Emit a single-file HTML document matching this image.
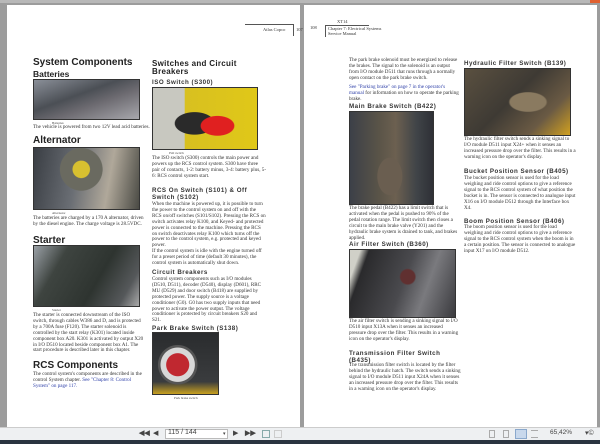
<!DOCTYPE html>
<html><head><meta charset="utf-8"><style>
*{margin:0;padding:0;box-sizing:border-box}
body{width:600px;height:444px;background:#9c9c9c;position:relative;overflow:hidden;font-family:"Liberation Serif",serif}
.pg{position:absolute;background:#fff;top:5px;height:422px}
.a{position:absolute}
.h1{font-family:"Liberation Sans",sans-serif;font-weight:bold;color:#222;font-size:10px;line-height:10px}
.h2{font-family:"Liberation Sans",sans-serif;font-weight:bold;color:#222;font-size:8.5px;line-height:8px}
.h3{font-family:"Liberation Sans",sans-serif;font-weight:bold;color:#333;font-size:6.2px;line-height:7px;letter-spacing:.5px}
.t{font-size:5.1px;line-height:5.9px;color:#333}
.cap{font-size:3.3px;color:#444}
.lk{color:#3344aa}
.img{position:absolute;border:1px solid #333}
.tb{position:absolute;top:427px;left:0;width:600px;height:13px;background:#eef0f2;border-top:1px solid #ccc}
.tb span{position:absolute;top:1px;font-family:"Liberation Sans",sans-serif;font-size:7px;color:#444}
</style></head><body>
<div style="position:absolute;left:0;top:0;width:600px;height:3px;background:#b8b8b8"></div>
<div style="position:absolute;left:590px;top:0;width:10px;height:3px;background:#e06030"></div>
<!-- left page -->
<div class="pg" style="left:7px;width:293px">
<div class="a" style="left:238px;top:19px;width:48px;height:1px;background:#555"></div>
<div class="a" style="left:286px;top:19px;width:1px;height:12px;background:#555"></div>
<div class="a t" style="left:256px;top:22px;font-size:4.5px">Atlas Copco</div>
<div class="a t" style="left:289px;top:22px;font-size:4.5px">107</div>

<div class="a h1" style="left:26px;top:53px">System Components</div>
<div class="a h2" style="left:26px;top:65px">Batteries</div>
<div class="img" style="left:26px;top:74px;width:107px;height:41px;background:linear-gradient(160deg,#8a8f98,#4b4f55 40%,#6c6a70 60%,#a8a8ad)"></div>
<div class="a cap" style="left:45px;top:116px">Batteries</div>
<div class="a t" style="left:26px;top:120px;white-space:nowrap">The vehicle is powered from two 12V lead acid batteries.</div>
<div class="a h1" style="left:26px;top:131px">Alternator</div>
<div class="img" style="left:26px;top:142px;width:107px;height:63px;background:radial-gradient(circle at 45% 35%,#d8c030 0 12%,#6a6a60 13% 30%,transparent 31%),linear-gradient(100deg,#3a3e44,#6a6e74 40%,#b0a89a 70%,#4a4a44)"></div>
<div class="a cap" style="left:45px;top:206px">Alternator</div>
<div class="a t" style="left:26px;top:211px;width:112px">The batteries are charged by a 170 A alternator, driven by the diesel engine. The charge voltage is 28.5VDC.</div>
<div class="a h1" style="left:26px;top:231px">Starter</div>
<div class="img" style="left:26px;top:240px;width:107px;height:62px;background:linear-gradient(120deg,#9aa0a6,#3e4440 25%,#2e3430 60%,#55585a 85%,#aaa)"></div>
<div class="a cap" style="left:45px;top:303px">Starter</div>
<div class="a t" style="left:26px;top:308px;width:112px">The starter is connected downstream of the ISO switch, through cables W386 and D, and is protected by a 700A fuse (F120). The starter solenoid is controlled by the start relay (K301) located inside component box A20. K301 is activated by output X20 in I/O D510 located beside component box A1. The start procedure is described later in this chapter.</div>
<div class="a h1" style="left:26px;top:356px">RCS Components</div>
<div class="a t" style="left:26px;top:367px;width:112px">The control system's components are described in the control System chapter. <span class="lk">See "Chapter 8: Control System" on page 117.</span></div>

<div class="a h2" style="left:145px;top:55px;font-size:8px;line-height:8px;letter-spacing:.3px">Switches and Circuit<br>Breakers</div>
<div class="a h3" style="left:145px;top:74px">ISO Switch (S300)</div>
<div class="img" style="left:145px;top:82px;width:106px;height:63px;background:radial-gradient(ellipse at 62% 62%,#e02020 0 18%,transparent 19%),radial-gradient(ellipse at 40% 58%,#2a2a2a 0 22%,transparent 23%),linear-gradient(90deg,#c8c8c0 0 30%,#d8c020 31%,#e0c818)"></div>
<div class="a cap" style="left:162px;top:146px">ISO switch</div>
<div class="a t" style="left:145px;top:151px;width:114px">The ISO switch (S300) controls the main power and powers up the RCS control system. S300 have three pair of contacts, 1-2: battery minus, 3-4: battery plus, 5-6: RCS control system start.</div>
<div class="a h3" style="left:145px;top:182px;line-height:7px">RCS On Switch (S101) &amp; Off<br>Switch (S102)</div>
<div class="a t" style="left:145px;top:197px;width:114px">When the machine is powered up, it is possible to turn the power to the control system on and off with the RCS on/off switches (S101/S102). Pressing the RCS on switch activates relay K100, and Keyed- and protected power is connected to the machine. Pressing the RCS on switch deactivates relay K100 which turns off the power to the control system, e.g. protected and keyed power.<br>If the control system is idle with the engine turned off for a preset period of time (default 30 minutes), the control system is automatically shut down.</div>
<div class="a h3" style="left:145px;top:264px">Circuit Breakers</div>
<div class="a t" style="left:145px;top:272px;width:114px">Control system components such as I/O modules (D510, D511), decoder (D540), display (D601), RRC MU (D529) and door switch (B418) are supplied by protected power. The supply source is a voltage conditioner (G0). G0 has two supply inputs that need power to activate the power output. The voltage conditioner is protected by circuit breakers S20 and S21.</div>
<div class="a h3" style="left:145px;top:320px">Park Brake Switch (S138)</div>
<div class="img" style="left:145px;top:327px;width:67px;height:63px;background:radial-gradient(circle at 38% 52%,#c02830 0 22%,#d8d8d8 23% 33%,#555 34% 38%,transparent 39%),linear-gradient(180deg,#2a2c2e,#3a3c3e 80%,#c8a020)"></div>
<div class="a cap" style="left:167px;top:391px">Park brake switch</div>
</div>
<!-- right page -->
<div class="pg" style="left:304px;width:293px">
<div class="a t" style="left:33px;top:14px;font-size:4.5px">XT14</div>
<div class="a t" style="left:6px;top:20px;font-size:4.5px">108</div>
<div class="a" style="left:21px;top:20px;width:1px;height:12px;background:#555"></div>
<div class="a" style="left:21px;top:20px;width:44px;height:1px;background:#555"></div>
<div class="a t" style="left:24px;top:21px;font-size:4.5px;line-height:5px">Chapter 7: Electrical Systems<br>Service Manual</div>

<div class="a t" style="left:45px;top:53px;width:110px">The park brake solenoid must be energized to release the brakes. The signal to the solenoid is an output from I/O module D511 that runs through a normally open contact on the park brake switch.</div>
<div class="a t" style="left:45px;top:80px;width:112px"><span class="lk">See "Parking brake" on page 7 in the operator's manual</span> for information on how to operate the parking brake.</div>
<div class="a h3" style="left:45px;top:98px">Main Brake Switch (B422)</div>
<div class="img" style="left:45px;top:106px;width:85px;height:94px;background:radial-gradient(ellipse at 48% 70%,#6a5e50 0 20%,transparent 21%),linear-gradient(90deg,#3c4048,#5a5448 35%,#6c6050 55%,#404448 80%,#2e3036)"></div>
<div class="a t" style="left:45px;top:201px;width:112px">The brake pedal (B422) has a limit switch that is activated when the pedal is pushed to 90% of the pedal rotation range. The limit switch then closes a circuit to the main brake valve (Y201) and the hydraulic brake system is drained to tank, and brakes applied.</div>
<div class="a h3" style="left:45px;top:236px">Air Filter Switch (B360)</div>
<div class="img" style="left:45px;top:244px;width:107px;height:69px;background:radial-gradient(circle at 55% 40%,#603030 0 10%,transparent 12%),linear-gradient(110deg,#d0d0c8 0 8%,#2a2a2c 15%,#4a4a4e 50%,#7a7a7e 70%,#3a3a3e)"></div>
<div class="a t" style="left:45px;top:314px;width:110px">The air filter switch is sending a sinking signal to I/O D510 input X13A when it senses an increased pressure drop over the filter. This results in a warning icon on the operator's display.</div>
<div class="a h3" style="left:45px;top:345px;line-height:7px">Transmission Filter Switch<br>(B435)</div>
<div class="a t" style="left:45px;top:358px;width:112px">The transmission filter switch is located by the filter behind the hydraulic hatch. The switch sends a sinking signal to I/O module D511 input X24A when it senses an increased pressure drop over the filter. This results in a warning icon on the operator's display.</div>

<div class="a h3" style="left:160px;top:55px">Hydraulic Filter Switch (B139)</div>
<div class="img" style="left:160px;top:63px;width:107px;height:68px;background:radial-gradient(ellipse at 60% 50%,#8a7a60 0 20%,transparent 22%),linear-gradient(135deg,#5a5040,#3e3a34 45%,#6a5a44 75%,#d0a020)"></div>
<div class="a t" style="left:160px;top:132px;width:112px">The hydraulic filter switch sends a sinking signal to I/O module D511 input X24+ when it senses an increased pressure drop over the filter. This results in a warning icon on the operator's display.</div>
<div class="a h3" style="left:160px;top:163px">Bucket Position Sensor (B405)</div>
<div class="a t" style="left:160px;top:171px;width:112px">The bucket position sensor is used for the load weighing and ride control options to give a reference signal to the RCS control system of what position the bucket is in. The sensor is connected to analogue input X16 on I/O module D512 through the Interface box X4.</div>
<div class="a h3" style="left:160px;top:213px">Boom Position Sensor (B406)</div>
<div class="a t" style="left:160px;top:220px;width:112px">The boom position sensor is used for the load weighing and ride control options to give a reference signal to the RCS control system when the boom is in a certain position. The sensor is connected to analogue input X17 on I/O module D512.</div>
</div>
<!-- toolbar -->
<div class="tb">
<span style="left:139px;font-weight:bold">◀◀</span>
<span style="left:153px">◀</span>
<div style="position:absolute;left:165px;top:1px;width:63px;height:10px;background:#fff;border:1px solid #bbb"></div>
<span style="left:168px">115 / 144</span>
<span style="left:223px;font-size:5px;top:3px">▾</span>
<span style="left:233px">▶</span>
<span style="left:245px;font-weight:bold">▶▶</span>
<div style="position:absolute;left:262px;top:2px;width:8px;height:8px;border:1px solid #8aa;"></div>
<div style="position:absolute;left:274px;top:2px;width:8px;height:8px;border:1px solid #ccc;"></div>
<div style="position:absolute;left:489px;top:2px;width:6px;height:8px;border:1px solid #aaa"></div>
<div style="position:absolute;left:503px;top:2px;width:6px;height:8px;border:1px solid #aaa"></div>
<div style="position:absolute;left:515px;top:1px;width:12px;height:10px;background:#c8d8ec;border:1px solid #8aa8cc"></div>
<div style="position:absolute;left:531px;top:2px;width:7px;height:8px;border-top:1px solid #aaa;border-bottom:1px solid #aaa"></div>
<span style="left:550px;font-size:6.5px">65,42%</span>
<span style="left:585px">▾©</span>
</div>
<div style="position:absolute;left:0;top:440px;width:600px;height:4px;background:#2a3440"></div>
</body></html>
